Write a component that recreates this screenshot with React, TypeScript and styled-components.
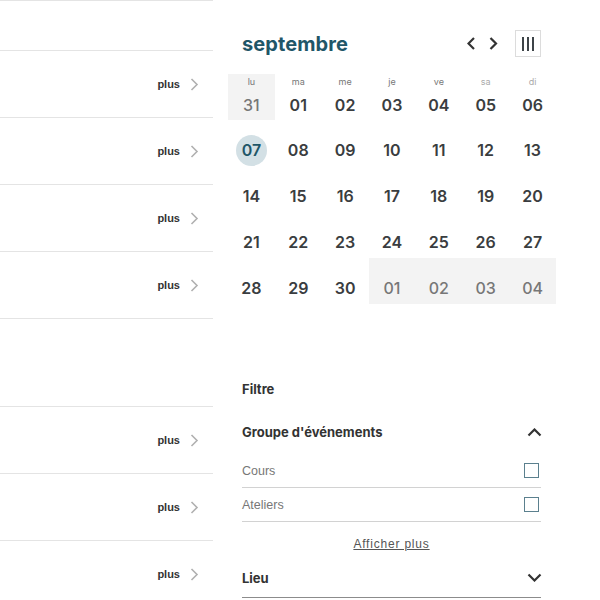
import React, { FC } from 'react'
import styled, { createGlobalStyle } from 'styled-components'

const GlobalStyle = createGlobalStyle`
  body {
    margin: 0;
    background: #fff;
    font-family: Inter, "Liberation Sans", sans-serif;
    color: #333;
  }
`

const Page = styled.div`
  display: flex;
  align-items: flex-start;
  width: 600px;
  height: 600px;
  overflow: hidden;
`

const EventList = styled.div`
  width: 213px;
  display: flex;
  flex-direction: column;
  border-top: 1px solid #e4e4e4;
`

const EventRow = styled.div<{ $height: number }>`
  height: ${(p) => p.$height}px;
  border-bottom: 1px solid #e4e4e4;
  display: flex;
  align-items: center;
  justify-content: flex-end;
  gap: 10px;
  padding-right: 14px;
  flex-shrink: 0;
`

const MoreLabel = styled.span`
  font-family: "Liberation Sans", Arial, sans-serif;
  font-weight: bold;
  font-size: 11px;
  color: #333;
`

const Side = styled.div`
  width: 328px;
  margin-left: 15px;
  padding-top: 30px;
  display: flex;
  flex-direction: column;
`

const CalHeader = styled.div`
  height: 27px;
  padding: 0 15px 0 14px;
  display: flex;
  align-items: center;
`

const Month = styled.h2`
  margin: 0;
  flex: 1;
  font-size: 20px;
  font-weight: 700;
  color: #1f5668;
  letter-spacing: 0.1px;
`

const NavButton = styled.button`
  border: none;
  background: none;
  padding: 0;
  width: 22px;
  height: 27px;
  display: flex;
  align-items: center;
  justify-content: center;
`

const ViewToggle = styled.button`
  margin-left: 11px;
  width: 26px;
  height: 27px;
  border: 1px solid #dcdcdc;
  background: #fff;
  padding: 0;
  display: flex;
  align-items: center;
  justify-content: center;
  gap: 3px;
`

const Bar = styled.span`
  width: 2px;
  height: 14px;
  background: #3e4448;
`

const Grid = styled.div`
  margin-top: 17px;
  display: grid;
  grid-template-columns: repeat(7, 1fr);
  grid-auto-rows: 46px;
`

const Cell = styled.div<{ $outside?: boolean }>`
  background: ${(p) => (p.$outside ? '#f3f3f3' : 'transparent')};
  display: flex;
  flex-direction: column;
  align-items: center;
  padding-top: 3px;
  box-sizing: border-box;
`

const WeekDay = styled.span<{ $weekend?: boolean }>`
  height: 10px;
  line-height: 10px;
  font-size: 9px;
  color: ${(p) => (p.$weekend ? '#aaa' : '#777')};
`

const DayNum = styled.span<{ $outside?: boolean; $today?: boolean }>`
  margin-top: 3px;
  width: 31px;
  height: 31px;
  line-height: 31px;
  text-align: center;
  border-radius: 50%;
  font-size: 16px;
  font-weight: ${(p) => (p.$outside ? 500 : 600)};
  color: ${(p) => (p.$today ? '#1f5668' : p.$outside ? '#777' : '#3a3d40')};
  background: ${(p) => (p.$today ? '#d3e0e5' : 'transparent')};
`

const Filters = styled.div`
  margin-top: 77px;
  padding: 0 15px 0 14px;
  display: flex;
  flex-direction: column;
`

const FilterTitle = styled.div`
  height: 16px;
  line-height: 16px;
  font-size: 13px;
  font-weight: 700;
  color: #333;
  margin-bottom: 21px;
`

const GroupHeader = styled.div<{ $border?: boolean }>`
  display: flex;
  align-items: center;
  justify-content: space-between;
  font-size: 13px;
  font-weight: 700;
  color: #333;
  height: ${(p) => (p.$border ? 39 : 28)}px;
  border-bottom: ${(p) => (p.$border ? '1px solid #8c8c8c' : 'none')};
`

const Options = styled.div`
  margin-top: 8px;
  display: flex;
  flex-direction: column;
`

const Option = styled.label`
  height: 33px;
  border-bottom: 1px solid #d2d2d2;
  display: flex;
  align-items: center;
  justify-content: space-between;
  font-family: "Liberation Sans", Arial, sans-serif;
  font-size: 12.5px;
  color: #777;
`

const Box = styled.span`
  width: 13px;
  height: 13px;
  border: 1.5px solid #5b808e;
  margin-right: 2px;
`

const ShowMore = styled.a`
  margin: 15px 0 7px;
  align-self: center;
  font-family: "Liberation Sans", Arial, sans-serif;
  font-size: 12px;
  line-height: 14px;
  letter-spacing: 0.8px;
  color: #555;
  text-decoration: underline;
`

const Chevron: FC<{ dir: 'left' | 'right' | 'up' | 'down'; color?: string; w?: number }> = ({
  dir,
  color = '#333',
  w = 2.2,
}) => {
  if (dir === 'up' || dir === 'down') {
    const d = dir === 'up' ? 'M1.5 7.5 L7.5 1.5 L13.5 7.5' : 'M1.5 1.5 L7.5 7.5 L13.5 1.5'
    return (
      <svg width="15" height="9" viewBox="0 0 15 9" style={{ marginRight: -1 }}>
        <path d={d} fill="none" stroke={color} strokeWidth={w} />
      </svg>
    )
  }
  const d = dir === 'left' ? 'M7 1 L1.5 6.5 L7 12' : 'M1.5 1 L7 6.5 L1.5 12'
  return (
    <svg width="9" height="13" viewBox="0 0 9 13">
      <path d={d} fill="none" stroke={color} strokeWidth={w} />
    </svg>
  )
}

const weekDays = ['lu', 'ma', 'me', 'je', 've', 'sa', 'di']

const days: { n: string; outside?: boolean }[] = [
  { n: '31', outside: true },
  ...Array.from({ length: 30 }, (_, i) => ({ n: String(i + 1).padStart(2, '0') })),
  { n: '01', outside: true },
  { n: '02', outside: true },
  { n: '03', outside: true },
  { n: '04', outside: true },
]

const rows = [
  { h: 49, more: false },
  { h: 66, more: true },
  { h: 66, more: true },
  { h: 66, more: true },
  { h: 66, more: true },
  { h: 87, more: false },
  { h: 66, more: true },
  { h: 66, more: true },
  { h: 66, more: true },
]

export default function App() {
  return (
    <>
      <GlobalStyle />
      <Page>
        <EventList>
          {rows.map((r, i) => (
            <EventRow key={i} $height={r.h}>
              {r.more && (
                <>
                  <MoreLabel>plus</MoreLabel>
                  <Chevron dir="right" color="#b0b0b0" w={1.6} />
                </>
              )}
            </EventRow>
          ))}
        </EventList>

        <Side>
          <CalHeader>
            <Month>septembre</Month>
            <NavButton aria-label="précédent">
              <Chevron dir="left" />
            </NavButton>
            <NavButton aria-label="suivant">
              <Chevron dir="right" />
            </NavButton>
            <ViewToggle aria-label="vue">
              <Bar />
              <Bar />
              <Bar />
            </ViewToggle>
          </CalHeader>

          <Grid>
            {days.map((d, i) => (
              <Cell key={i} $outside={d.outside}>
                <WeekDay $weekend={i % 7 >= 5}>{i < 7 ? weekDays[i] : ''}</WeekDay>
                <DayNum $outside={d.outside} $today={!d.outside && d.n === '07'}>
                  {d.n}
                </DayNum>
              </Cell>
            ))}
          </Grid>

          <Filters>
            <FilterTitle>Filtre</FilterTitle>
            <GroupHeader>
              Groupe d'événements
              <Chevron dir="up" />
            </GroupHeader>
            <Options>
              <Option>
                Cours
                <Box />
              </Option>
              <Option>
                Ateliers
                <Box />
              </Option>
            </Options>
            <ShowMore>Afficher plus</ShowMore>
            <GroupHeader $border>
              Lieu
              <Chevron dir="down" />
            </GroupHeader>
          </Filters>
        </Side>
      </Page>
    </>
  )
}
